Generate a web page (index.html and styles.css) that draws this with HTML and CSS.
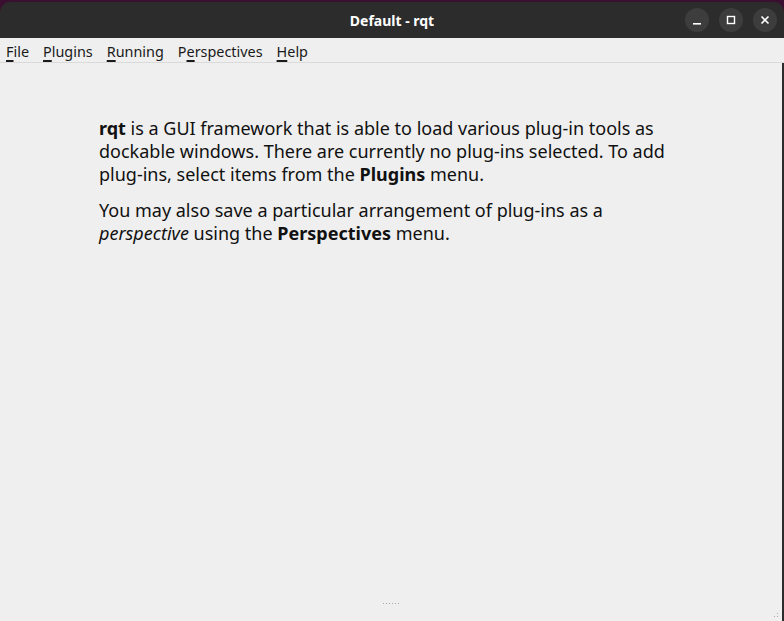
FILE: index.html
```html
<!DOCTYPE html>
<html>
<head>
<meta charset="utf-8">
<link rel="stylesheet" href="styles.css">
</head>
<body>
<div class="window">
  <div class="titlebar">
    <div class="title">Default - rqt</div>
    <div class="controls">
      <div class="btn"><svg width="24" height="24" viewBox="0 0 24 24"><rect x="8" y="15" width="8" height="1.6" fill="#fff"/></svg></div>
      <div class="btn"><svg width="24" height="24" viewBox="0 0 24 24"><rect x="8.5" y="8.5" width="7" height="7" fill="none" stroke="#fff" stroke-width="1.4"/></svg></div>
      <div class="btn"><svg width="24" height="24" viewBox="0 0 24 24"><path d="M8.5 8.5 L15.5 15.5 M15.5 8.5 L8.5 15.5" stroke="#fff" stroke-width="1.6"/></svg></div>
    </div>
  </div>
  <div class="menubar">
    <span class="item"><u>F</u>ile</span>
    <span class="item"><u>P</u>lugins</span>
    <span class="item"><u>R</u>unning</span>
    <span class="item">P<u>e</u>rspectives</span>
    <span class="item"><u>H</u>elp</span>
  </div>
  <div class="content">
    <div class="text">
      <p><b>rqt</b> is a GUI framework that is able to load various plug-in tools as<br>dockable windows. There are currently no plug-ins selected. To add<br>plug-ins, select items from the <b>Plugins</b> menu.</p>
      <p>You may also save a particular arrangement of plug-ins as a<br><i>perspective</i> using the <b>Perspectives</b> menu.</p>
    </div>
    <div class="handle"></div>
    <div class="grip"></div>
  </div>
</div>
</body>
</html>
```
FILE: styles.css
```css
html, body {
  margin: 0;
  padding: 0;
  background: #3a0f30;
}
.window {
  width: 784px;
  height: 621px;
  display: flex;
  flex-direction: column;
  box-sizing: border-box;
  padding-top: 2px;
}
.titlebar {
  height: 36px;
  background: #2c2c2c;
  border-radius: 10px 10px 0 0;
  position: relative;
  display: flex;
  align-items: center;
  justify-content: center;
  flex: none;
}
.title {
  color: #ffffff;
  font-family: "Noto Sans", sans-serif;
  font-weight: 700;
  font-size: 14px;
}
.controls {
  position: absolute;
  right: 7px;
  top: 6px;
  display: flex;
  gap: 10px;
}
.btn {
  width: 24px;
  height: 24px;
  border-radius: 50%;
  background: #3d3d3d;
}
.btn svg { display: block; }
.menubar {
  height: 25px;
  background: #efefef;
  border-bottom: 1px solid #dadada;
  display: flex;
  align-items: center;
  padding: 2px 0 0 6px;
  box-sizing: border-box;
  gap: 14px;
  font-family: "Noto Sans", sans-serif;
  font-size: 14.4px;
  color: #1a1a1a;
  flex: none;
}
.menubar u {
  text-decoration-thickness: 2px;
  text-underline-offset: 3px;
}
.content {
  flex: 1;
  background: #efefef;
  position: relative;
  border-right: 2px solid #2c2c2c;
}
.text {
  padding: 54px 0 0 99px;
  font-family: "Noto Sans", sans-serif;
  font-size: 18px;
  line-height: 23px;
  color: #111;
}
.text p {
  margin: 0 0 13px 0;
}
.text b { font-weight: 700; }
.handle {
  position: absolute;
  left: 383px;
  bottom: 17px;
  width: 16px;
  height: 1px;
  background: repeating-linear-gradient(90deg, #a8a8a8 0 1px, transparent 1px 3px);
}
.grip {
  position: absolute;
  right: 2px;
  bottom: 2px;
  width: 10px;
  height: 10px;
  background:
    radial-gradient(circle, #aaa 0.8px, transparent 1px) 0 0 / 3px 3px;
  clip-path: polygon(100% 0, 100% 100%, 0 100%);
}
```
